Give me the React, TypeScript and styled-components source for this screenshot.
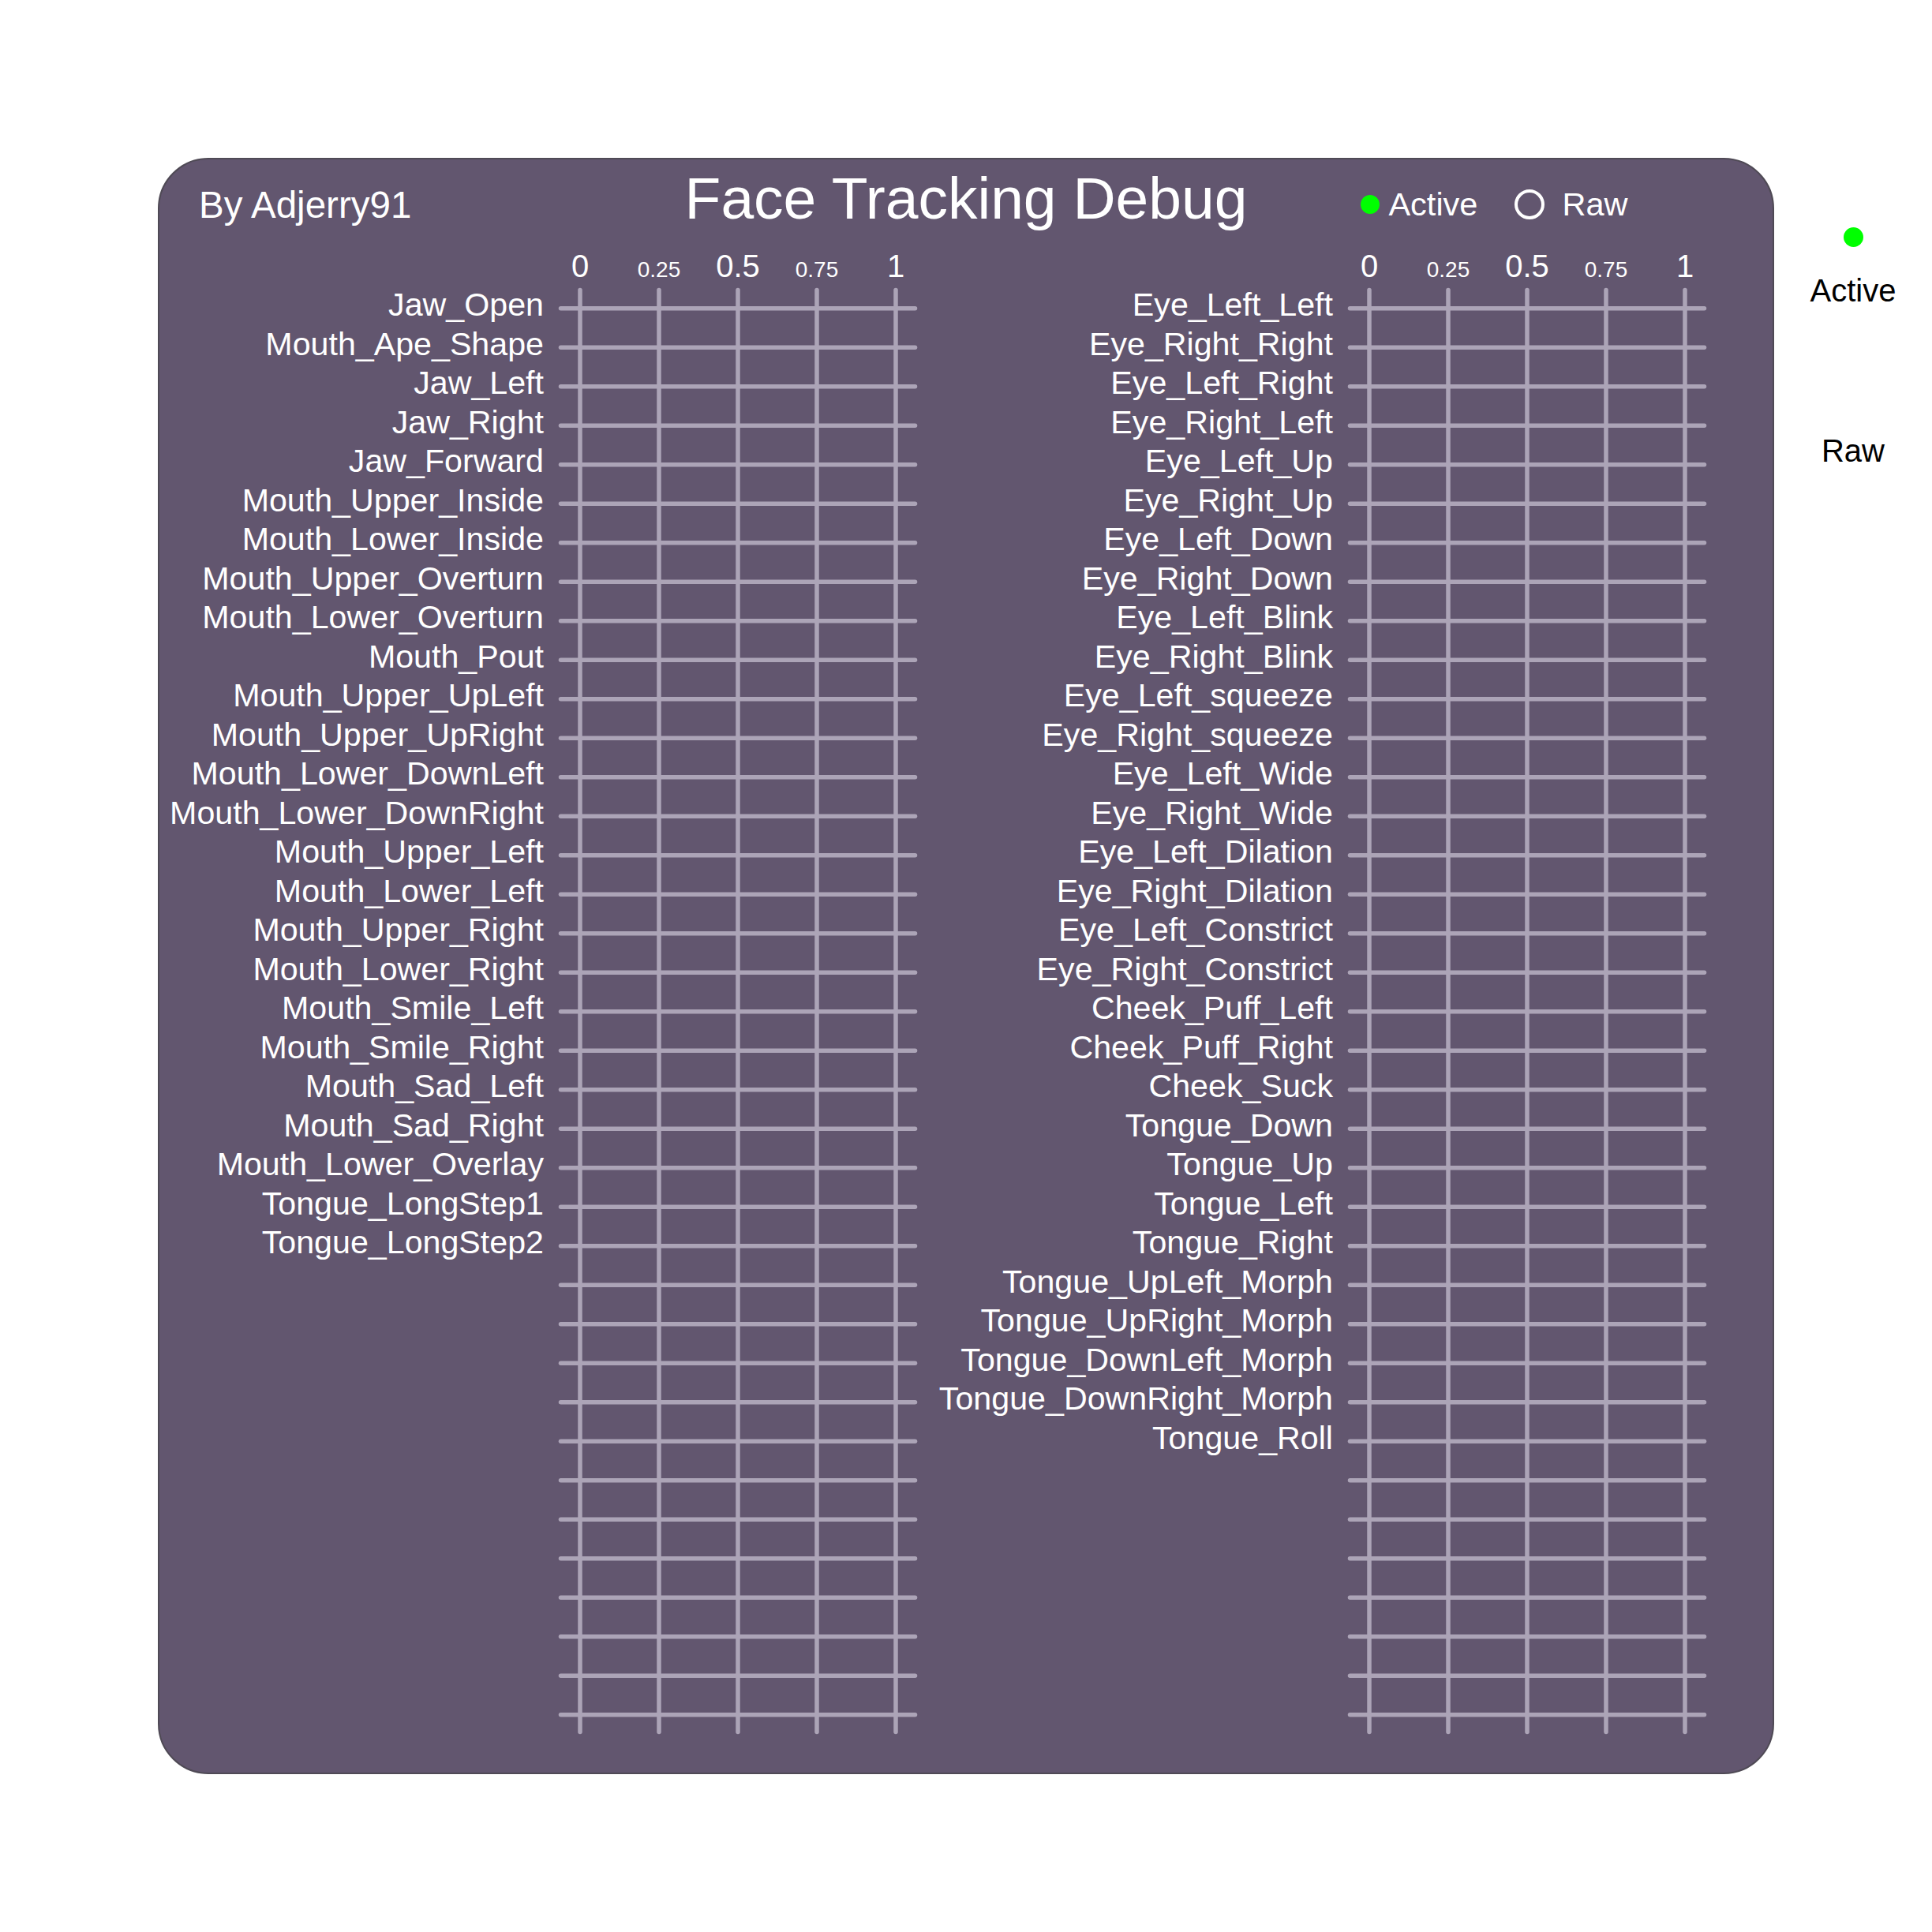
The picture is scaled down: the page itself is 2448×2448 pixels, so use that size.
import React from "react";
import styled, { createGlobalStyle } from "styled-components";

const GlobalStyle = createGlobalStyle`
  html, body {
    margin: 0;
    padding: 0;
    background: #ffffff;
  }
  body {
    font-family: "Liberation Sans", Arial, sans-serif;
  }
`;

const Page = styled.div`
  width: 2448px;
  height: 2448px;
  box-sizing: border-box;
  padding: 200px 0 0 200px;
  display: flex;
  align-items: flex-start;
`;

const Panel = styled.section`
  width: 2048px;
  height: 2048px;
  box-sizing: border-box;
  background: #62566f;
  border: 2px solid #4f4a55;
  border-radius: 64px;
  padding-top: 12px;
  display: flex;
  flex-direction: column;
  color: #ffffff;
  overflow: hidden;
`;

const Header = styled.header`
  display: grid;
  grid-template-columns: 1fr auto 1fr;
  align-items: start;
  height: 74px;
`;

const Author = styled.div`
  margin-top: 22px;
  padding-left: 50px;
  font-size: 47.5px;
  line-height: 1;
  white-space: nowrap;
`;

const Title = styled.h1`
  margin: 0;
  font-weight: 400;
  font-size: 75px;
  line-height: 1;
  white-space: nowrap;
`;

const Legend = styled.div`
  margin-top: 24px;
  padding-left: 144px;
  display: flex;
  align-items: center;
  font-size: 41.5px;
  line-height: 1;
  white-space: nowrap;
`;

const LegendItem = styled.div<{ $first?: boolean }>`
  display: flex;
  align-items: center;
  gap: ${(p) => (p.$first ? 11 : 22)}px;
  margin-left: ${(p) => (p.$first ? 0 : 47)}px;
`;

const Dot = styled.span<{ $size: number }>`
  display: block;
  width: ${(p) => p.$size}px;
  height: ${(p) => p.$size}px;
  border-radius: 50%;
  background: #00ff00;
  flex: none;
`;

const Ring = styled.span<{ $color: string }>`
  display: block;
  width: 38px;
  height: 38px;
  box-sizing: border-box;
  border-radius: 50%;
  border: 4.5px solid ${(p) => p.$color};
  flex: none;
`;

const ChartsRow = styled.div`
  margin-top: 22px;
  padding-left: 6px;
  display: flex;
  gap: 43px;
`;

const ChartGroup = styled.div`
  display: flex;
  align-items: flex-start;
`;

const LabelColumn = styled.div`
  width: 481px;
  padding-top: 52px;
  display: flex;
  flex-direction: column;
`;

const LabelRow = styled.div`
  height: 49.5px;
  line-height: 49.5px;
  font-size: 41.2px;
  display: flex;
  justify-content: flex-end;
  white-space: nowrap;
`;

const PlotSvg = styled.svg`
  display: block;
  margin-left: 16px;
  flex: none;
  font-family: "Liberation Sans", Arial, sans-serif;
`;

const Sidebar = styled.aside`
  width: 200px;
  padding-top: 88px;
  display: flex;
  flex-direction: column;
  align-items: center;
  color: #000000;
  font-size: 40px;
  line-height: 1;
`;

const SideLabel = styled.div<{ $gap: number }>`
  margin-top: ${(p) => p.$gap}px;
  white-space: nowrap;
`;

const SideRing = styled.div`
  margin-top: 96.5px;
`;

const leftLabels = [
  "Jaw_Open",
  "Mouth_Ape_Shape",
  "Jaw_Left",
  "Jaw_Right",
  "Jaw_Forward",
  "Mouth_Upper_Inside",
  "Mouth_Lower_Inside",
  "Mouth_Upper_Overturn",
  "Mouth_Lower_Overturn",
  "Mouth_Pout",
  "Mouth_Upper_UpLeft",
  "Mouth_Upper_UpRight",
  "Mouth_Lower_DownLeft",
  "Mouth_Lower_DownRight",
  "Mouth_Upper_Left",
  "Mouth_Lower_Left",
  "Mouth_Upper_Right",
  "Mouth_Lower_Right",
  "Mouth_Smile_Left",
  "Mouth_Smile_Right",
  "Mouth_Sad_Left",
  "Mouth_Sad_Right",
  "Mouth_Lower_Overlay",
  "Tongue_LongStep1",
  "Tongue_LongStep2",
];

const rightLabels = [
  "Eye_Left_Left",
  "Eye_Right_Right",
  "Eye_Left_Right",
  "Eye_Right_Left",
  "Eye_Left_Up",
  "Eye_Right_Up",
  "Eye_Left_Down",
  "Eye_Right_Down",
  "Eye_Left_Blink",
  "Eye_Right_Blink",
  "Eye_Left_squeeze",
  "Eye_Right_squeeze",
  "Eye_Left_Wide",
  "Eye_Right_Wide",
  "Eye_Left_Dilation",
  "Eye_Right_Dilation",
  "Eye_Left_Constrict",
  "Eye_Right_Constrict",
  "Cheek_Puff_Left",
  "Cheek_Puff_Right",
  "Cheek_Suck",
  "Tongue_Down",
  "Tongue_Up",
  "Tongue_Left",
  "Tongue_Right",
  "Tongue_UpLeft_Morph",
  "Tongue_UpRight_Morph",
  "Tongue_DownLeft_Morph",
  "Tongue_DownRight_Morph",
  "Tongue_Roll",
];

const ticks = [
  { v: 0, t: "0", big: true },
  { v: 0.25, t: "0.25", big: false },
  { v: 0.5, t: "0.5", big: true },
  { v: 0.75, t: "0.75", big: false },
  { v: 1, t: "1", big: true },
];

const ROWS = 37;
const PITCH = 49.5;
const FIRST = 80.7;
const GRID = "#aca4b7";

function Plot() {
  const rows = Array.from({ length: ROWS }, (_, k) => FIRST + k * PITCH);
  return (
    <PlotSvg width={460} height={1890} viewBox="0 0 460 1890">
      {ticks.map((tk) => (
        <text
          key={tk.t}
          x={30 + tk.v * 400}
          y={41}
          fill="#ffffff"
          fontSize={tk.big ? 40 : 28}
          textAnchor="middle"
        >
          {tk.t}
        </text>
      ))}
      {rows.map((y, k) => (
        <line
          key={`h${k}`}
          x1={5.5}
          x2={454.5}
          y1={y}
          y2={y}
          stroke={GRID}
          strokeWidth={5.5}
          strokeLinecap="round"
        />
      ))}
      {ticks.map((tk) => (
        <line
          key={`v${tk.t}`}
          x1={30 + tk.v * 400}
          x2={30 + tk.v * 400}
          y1={57.5}
          y2={1884.5}
          stroke={GRID}
          strokeWidth={5.5}
          strokeLinecap="round"
        />
      ))}
    </PlotSvg>
  );
}

function Chart({ labels }: { labels: string[] }) {
  return (
    <ChartGroup>
      <LabelColumn>
        {labels.map((l) => (
          <LabelRow key={l}>{l}</LabelRow>
        ))}
      </LabelColumn>
      <Plot />
    </ChartGroup>
  );
}

export default function App() {
  return (
    <>
      <GlobalStyle />
      <Page>
        <Panel>
          <Header>
            <Author>By Adjerry91</Author>
            <Title>Face Tracking Debug</Title>
            <Legend>
              <LegendItem $first>
                <Dot $size={24} />
                <span>Active</span>
              </LegendItem>
              <LegendItem>
                <Ring $color="#ffffff" />
                <span>Raw</span>
              </LegendItem>
            </Legend>
          </Header>
          <ChartsRow>
            <Chart labels={leftLabels} />
            <Chart labels={rightLabels} />
          </ChartsRow>
        </Panel>
        <Sidebar>
          <Dot $size={25} />
          <SideLabel $gap={35}>Active</SideLabel>
          <SideRing>
            <Ring $color="#ffffff" />
          </SideRing>
          <SideLabel $gap={28.5}>Raw</SideLabel>
        </Sidebar>
      </Page>
    </>
  );
}
